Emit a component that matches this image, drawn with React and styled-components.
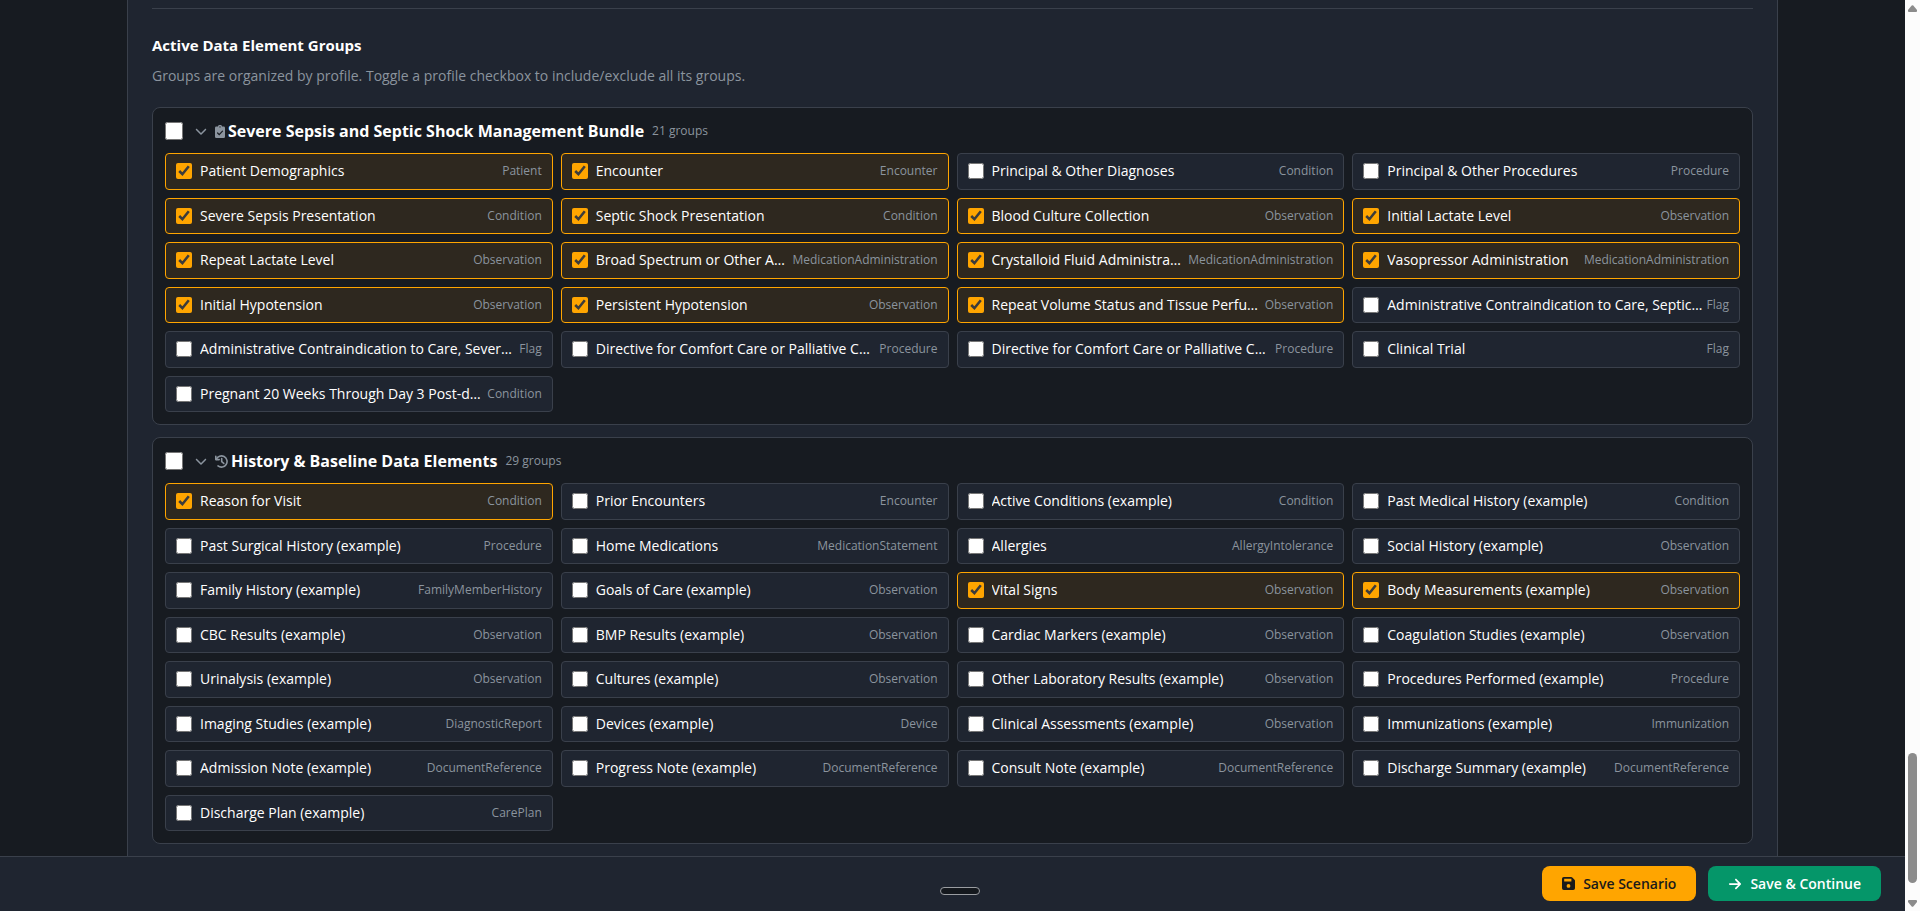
import React, { useState } from "react";
import styled, { createGlobalStyle } from "styled-components";
import { FaChevronDown, FaArrowRight } from "react-icons/fa6";

const Global = createGlobalStyle`
  *, *::before, *::after { box-sizing: border-box; }
  body {
    margin: 0;
    background: #171b21;
    color: #ffffff;
    font-family: "Open Sans", "Noto Sans", sans-serif;
    font-size: 14px;
  }
`;

const Shell = styled.div`
  display: grid;
  grid-template-columns: minmax(0, 1fr) 15px;
  height: 100vh;
  overflow: hidden;
`;

const Main = styled.div`
  display: flex;
  flex-direction: column;
  min-width: 0;
  min-height: 0;
`;

const Viewport = styled.main`
  flex: 1;
  min-height: 0;
  overflow: hidden;
  display: flex;
  justify-content: center;
`;

const Panel = styled.div`
  flex: 1;
  max-width: 1651px;
  padding: 8px 24px 0;
  background: #1f2530;
  border: solid #3a404b;
  border-width: 0 1px;
`;

const Divider = styled.hr`
  margin: 0 0 24px;
  border: 0;
  border-top: 1px solid #3a404b;
`;

const Heading = styled.h3`
  margin: 0 0 8px;
  font-size: 15px;
  font-weight: 700;
  line-height: 24px;
`;

const Hint = styled.p`
  margin: 0 0 20px;
  color: #8b949e;
  font-size: 14px;
  line-height: 22px;
`;

const Profile = styled.section`
  padding: 12px;
  margin-bottom: 12px;
  background: #171b21;
  border: 1px solid #3a404b;
  border-radius: 8px;
`;

const ProfileHeader = styled.div`
  display: flex;
  align-items: center;
  height: 22px;
  margin-bottom: 11px;
`;

const Collapse = styled.button`
  display: flex;
  margin: 0 8px 0 12px;
  padding: 0;
  border: 0;
  background: none;
  color: #8b949e;
  font-size: 12px;
  cursor: pointer;
`;

const ProfileTitle = styled.label`
  display: flex;
  align-items: center;
  gap: 3px;
  margin-right: 8px;
  font-size: 16px;
  font-weight: 700;
  line-height: 22px;

  svg { color: #8b949e; }
`;

const Muted = styled.span`
  flex: none;
  color: #8b949e;
  font-size: 12px;
  line-height: 18px;
`;

const Grid = styled.div`
  display: grid;
  grid-template-columns: repeat(4, minmax(0, 1fr));
  grid-auto-rows: minmax(37px, auto) minmax(36px, auto);
  gap: 8px;
`;

const Item = styled.label`
  display: flex;
  align-items: flex-start;
  gap: 4px;
  padding: 8px 10px;
  background: ${(p) => (p.$on ? "#2e281f" : "#1f2530")};
  border: 1px solid ${(p) => (p.$on ? "#ffa500" : "#3a404b")};
  border-radius: 4px;
  cursor: pointer;
`;

const ItemName = styled.span`
  flex: 1;
  min-width: 0;
  overflow: hidden;
  white-space: nowrap;
  text-overflow: ellipsis;
  font-size: 14px;
  line-height: 18px;
`;

const Check = styled.input`
  flex: none;
  width: 18px;
  height: 18px;
  margin: 0;
  accent-color: #ffa500;
`;

const ItemCheck = styled(Check)`
  width: 16px;
  height: 16px;
  margin: 1px 4px 1px 0;
`;

const Footer = styled.footer`
  display: flex;
  justify-content: flex-end;
  gap: 12px;
  padding: 9px 24px 10px;
  background: #1f2530;
  border-top: 1px solid #3a404b;
`;

const Action = styled.button`
  display: flex;
  align-items: center;
  gap: 8px;
  height: 35px;
  padding: 0 20px;
  border: 0;
  border-radius: 8px;
  background: ${(p) => (p.$primary ? "#059669" : "#ffa500")};
  color: ${(p) => (p.$primary ? "#ffffff" : "#1a1a1a")};
  font-family: inherit;
  font-size: 14px;
  font-weight: 600;
  cursor: pointer;
`;

const Handle = styled.div`
  position: fixed;
  bottom: 16px;
  left: 50%;
  width: 40px;
  height: 8px;
  margin-left: -20px;
  background: #14181d;
  border: 1px solid #9a9da1;
  border-radius: 4px;
`;

const ScrollTrack = styled.div`
  display: flex;
  flex-direction: column;
  align-items: center;
  padding: 5px 0 4px;
  background: #fcfcfc;
  color: #8b8b8b;
`;

const ScrollThumb = styled.div`
  width: 9px;
  height: 130px;
  margin: auto 0 17px;
  border-radius: 5px;
  background: #8b8b8b;
`;

const Arrow = ({ down }) => (
  <svg width="9" height="7" viewBox="0 0 9 7" aria-hidden="true">
    <path fill="currentColor" d={down ? "M0 0.8 Q0 0 1 0H8Q9 0 9 0.8V2L5.3 6.4Q4.5 7.3 3.7 6.4L0 2Z" : "M0 6.2Q0 7 1 7H8Q9 7 9 6.2V5L5.3 0.6Q4.5-0.3 3.7 0.6L0 5Z"} />
  </svg>
);

const ClipboardIcon = () => (
  <svg width="10" height="13" viewBox="0 0 10 13" aria-hidden="true">
    <path fill="currentColor" d="M1.3 1.6H3A2 1.7 0 0 1 7 1.6H8.7A1.3 1.3 0 0 1 10 2.9V11.7A1.3 1.3 0 0 1 8.7 13H1.3A1.3 1.3 0 0 1 0 11.7V2.9A1.3 1.3 0 0 1 1.3 1.6Z" />
    <circle cx="5" cy="1.9" r="0.7" fill="#171b21" />
    <path fill="none" stroke="#171b21" strokeWidth="1.2" strokeLinecap="round" d="M2.6 8 4.2 9.6 7.5 6.2" />
  </svg>
);

const HistoryIcon = () => (
  <svg width="13" height="13" viewBox="0 0 13 13" fill="none" stroke="currentColor" strokeWidth="1.6" strokeLinecap="round" strokeLinejoin="round" aria-hidden="true">
    <path d="M0.8 1.2V4.6H4.2" />
    <path d="M1.3 4.3A5.6 5.6 0 1 1 3 10.9" />
    <path d="M6.7 3.6V6.7L8.8 8.4" />
  </svg>
);

const SaveIcon = () => (
  <svg width="13" height="13" viewBox="0 0 13 13" aria-hidden="true">
    <path fill="currentColor" fillRule="evenodd" d="M1.8 0H9.2Q9.8 0 10.3 0.5L12.5 2.7Q13 3.2 13 3.8V11.2Q13 13 11.2 13H1.8Q0 13 0 11.2V1.8Q0 0 1.8 0ZM2.2 1.8V4.6H9.4V1.8ZM6.5 7A1.9 1.9 0 1 0 6.5 10.8A1.9 1.9 0 1 0 6.5 7Z" />
  </svg>
);

const O = "Observation";
const M = "MedicationAdministration";

const profiles = [
  {
    id: "sepsis",
    title: "Severe Sepsis and Septic Shock Management Bundle",
    Icon: ClipboardIcon,
    groups: [
      ["Patient Demographics", "Patient", 1],
      ["Encounter", "Encounter", 1],
      ["Principal & Other Diagnoses", "Condition"],
      ["Principal & Other Procedures", "Procedure"],
      ["Severe Sepsis Presentation", "Condition", 1],
      ["Septic Shock Presentation", "Condition", 1],
      ["Blood Culture Collection", O, 1],
      ["Initial Lactate Level", O, 1],
      ["Repeat Lactate Level", O, 1],
      ["Broad Spectrum or Other Antibiotic Administration", M, 1],
      ["Crystalloid Fluid Administration", M, 1],
      ["Vasopressor Administration", M, 1],
      ["Initial Hypotension", O, 1],
      ["Persistent Hypotension", O, 1],
      ["Repeat Volume Status and Tissue Perfusion Assessment", O, 1],
      ["Administrative Contraindication to Care, Septic Shock", "Flag"],
      ["Administrative Contraindication to Care, Severe Sepsis", "Flag"],
      ["Directive for Comfort Care or Palliative Care, Severe Sepsis", "Procedure"],
      ["Directive for Comfort Care or Palliative Care, Septic Shock", "Procedure"],
      ["Clinical Trial", "Flag"],
      ["Pregnant 20 Weeks Through Day 3 Post-delivery", "Condition"],
    ],
  },
  {
    id: "history",
    title: "History & Baseline Data Elements",
    Icon: HistoryIcon,
    groups: [
      ["Reason for Visit", "Condition", 1],
      ["Prior Encounters", "Encounter"],
      ["Active Conditions (example)", "Condition"],
      ["Past Medical History (example)", "Condition"],
      ["Past Surgical History (example)", "Procedure"],
      ["Home Medications", "MedicationStatement"],
      ["Allergies", "AllergyIntolerance"],
      ["Social History (example)", O],
      ["Family History (example)", "FamilyMemberHistory"],
      ["Goals of Care (example)", O],
      ["Vital Signs", O, 1],
      ["Body Measurements (example)", O, 1],
      ["CBC Results (example)", O],
      ["BMP Results (example)", O],
      ["Cardiac Markers (example)", O],
      ["Coagulation Studies (example)", O],
      ["Urinalysis (example)", O],
      ["Cultures (example)", O],
      ["Other Laboratory Results (example)", O],
      ["Procedures Performed (example)", "Procedure"],
      ["Imaging Studies (example)", "DiagnosticReport"],
      ["Devices (example)", "Device"],
      ["Clinical Assessments (example)", O],
      ["Immunizations (example)", "Immunization"],
      ["Admission Note (example)", "DocumentReference"],
      ["Progress Note (example)", "DocumentReference"],
      ["Consult Note (example)", "DocumentReference"],
      ["Discharge Summary (example)", "DocumentReference"],
      ["Discharge Plan (example)", "CarePlan"],
    ],
  },
];

const GroupItem = ({ name, type, initial }) => {
  const [on, setOn] = useState(initial);
  return (
    <Item $on={on}>
      <ItemCheck type="checkbox" checked={on} onChange={() => setOn(!on)} />
      <ItemName>{name}</ItemName>
      <Muted>{type}</Muted>
    </Item>
  );
};

export default function App() {
  return (
    <>
      <Global />
      <Shell>
        <Main>
          <Viewport>
            <Panel>
              <Divider />
              <Heading>Active Data Element Groups</Heading>
              <Hint>Groups are organized by profile. Toggle a profile checkbox to include/exclude all its groups.</Hint>
              {profiles.map(({ id, title, Icon, groups }) => (
                <Profile key={id}>
                  <ProfileHeader>
                    <Check type="checkbox" id={id} />
                    <Collapse type="button" aria-label={`Collapse ${title}`}>
                      <FaChevronDown />
                    </Collapse>
                    <ProfileTitle htmlFor={id}>
                      <Icon />
                      {title}
                    </ProfileTitle>
                    <Muted>{groups.length} groups</Muted>
                  </ProfileHeader>
                  <Grid>
                    {groups.map(([name, type, on]) => (
                      <GroupItem key={name} name={name} type={type} initial={Boolean(on)} />
                    ))}
                  </Grid>
                </Profile>
              ))}
            </Panel>
          </Viewport>
          <Footer>
            <Action type="button">
              <SaveIcon />
              Save Scenario
            </Action>
            <Action type="button" $primary>
              <FaArrowRight />
              Save &amp; Continue
            </Action>
          </Footer>
        </Main>
        <ScrollTrack aria-hidden="true">
          <Arrow />
          <ScrollThumb />
          <Arrow down />
        </ScrollTrack>
      </Shell>
      <Handle />
    </>
  );
}
